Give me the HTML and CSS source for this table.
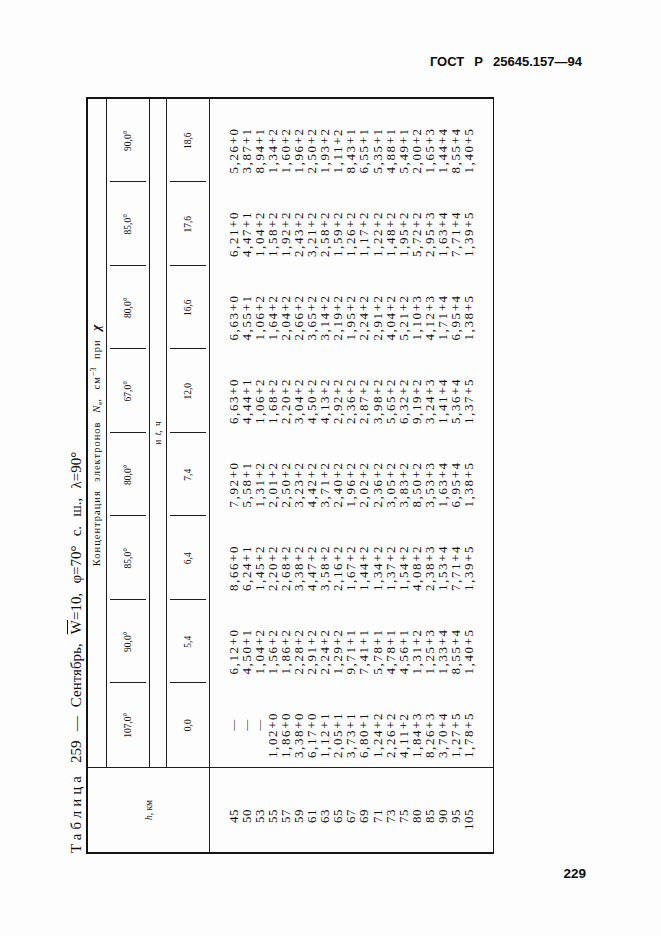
FILE: index.html
```html
<!DOCTYPE html>
<html lang="ru">
<head>
<meta charset="utf-8">
<title>ГОСТ Р 25645.157—94, с. 229</title>
<link rel="stylesheet" href="styles.css">
</head>
<body>
<div class="page">
  <header class="runhead">ГОСТ Р 25645.157—94</header>
  <div class="sheet">
    <div class="turn">
      <p class="caption"><span class="spaced">Таблица</span> 259 — Сентябрь, <span class="bar">W</span>=10, φ=70° с. ш., λ=90°</p>
      <table class="data">
        <colgroup><col class="c-h"><col class="c-v"><col class="c-v"><col class="c-v"><col class="c-v"><col class="c-v"><col class="c-v"><col class="c-v"><col class="c-v"></colgroup>
        <thead>
          <tr class="r-conc"><th rowspan="4" class="hcol"><i>h</i>, км</th><th colspan="8" class="conc">Концентрация электронов <i>N</i><sub>e</sub>, см<sup>−3</sup> при <i class="chi-sym">χ</i></th></tr>
          <tr class="r-chi"><th>107,0°</th><th>90,0°</th><th>85,0°</th><th>80,0°</th><th>67,0°</th><th>80,0°</th><th>85,0°</th><th>90,0°</th></tr>
          <tr class="r-tl"><th colspan="8" class="tlabel">и <i>t</i>, ч</th></tr>
          <tr class="r-t"><th>0,0</th><th>5,4</th><th>6,4</th><th>7,4</th><th>12,0</th><th>16,6</th><th>17,6</th><th>18,6</th></tr>
        </thead>
        <tbody>
          <tr><td class="h">45</td><td class="na">—</td><td>6,12+0</td><td>8,66+0</td><td>7,92+0</td><td>6,63+0</td><td>6,63+0</td><td>6,21+0</td><td>5,26+0</td></tr>
          <tr><td class="h">50</td><td class="na">—</td><td>4,50+1</td><td>6,24+1</td><td>5,58+1</td><td>4,44+1</td><td>4,55+1</td><td>4,47+1</td><td>3,87+1</td></tr>
          <tr><td class="h">53</td><td class="na">—</td><td>1,04+2</td><td>1,45+2</td><td>1,31+2</td><td>1,06+2</td><td>1,06+2</td><td>1,04+2</td><td>8,94+1</td></tr>
          <tr><td class="h">55</td><td>1,02+0</td><td>1,56+2</td><td>2,20+2</td><td>2,01+2</td><td>1,68+2</td><td>1,64+2</td><td>1,58+2</td><td>1,34+2</td></tr>
          <tr><td class="h">57</td><td>1,86+0</td><td>1,86+2</td><td>2,68+2</td><td>2,50+2</td><td>2,20+2</td><td>2,04+2</td><td>1,92+2</td><td>1,60+2</td></tr>
          <tr><td class="h">59</td><td>3,38+0</td><td>2,28+2</td><td>3,38+2</td><td>3,23+2</td><td>3,04+2</td><td>2,66+2</td><td>2,43+2</td><td>1,96+2</td></tr>
          <tr><td class="h">61</td><td>6,17+0</td><td>2,91+2</td><td>4,47+2</td><td>4,42+2</td><td>4,50+2</td><td>3,65+2</td><td>3,21+2</td><td>2,50+2</td></tr>
          <tr><td class="h">63</td><td>1,12+1</td><td>2,24+2</td><td>3,58+2</td><td>3,71+2</td><td>4,13+2</td><td>3,14+2</td><td>2,58+2</td><td>1,93+2</td></tr>
          <tr><td class="h">65</td><td>2,05+1</td><td>1,29+2</td><td>2,16+2</td><td>2,40+2</td><td>2,92+2</td><td>2,19+2</td><td>1,59+2</td><td>1,11+2</td></tr>
          <tr><td class="h">67</td><td>3,73+1</td><td>9,71+1</td><td>1,67+2</td><td>1,96+2</td><td>2,36+2</td><td>1,95+2</td><td>1,26+2</td><td>8,43+1</td></tr>
          <tr><td class="h">69</td><td>6,80+1</td><td>7,41+1</td><td>1,44+2</td><td>2,02+2</td><td>2,87+2</td><td>2,24+2</td><td>1,17+2</td><td>6,55+1</td></tr>
          <tr><td class="h">71</td><td>1,24+2</td><td>5,78+1</td><td>1,34+2</td><td>2,36+2</td><td>3,98+2</td><td>2,91+2</td><td>1,22+2</td><td>5,35+1</td></tr>
          <tr><td class="h">73</td><td>2,26+2</td><td>4,78+1</td><td>1,37+2</td><td>3,05+2</td><td>5,65+2</td><td>4,04+2</td><td>1,48+2</td><td>4,88+1</td></tr>
          <tr><td class="h">75</td><td>4,11+2</td><td>4,56+1</td><td>1,54+2</td><td>3,83+2</td><td>6,32+2</td><td>5,21+2</td><td>1,95+2</td><td>5,49+1</td></tr>
          <tr><td class="h">80</td><td>1,84+3</td><td>1,31+2</td><td>4,08+2</td><td>8,50+2</td><td>9,19+2</td><td>1,10+3</td><td>5,72+2</td><td>2,00+2</td></tr>
          <tr><td class="h">85</td><td>8,26+3</td><td>1,25+3</td><td>2,38+3</td><td>3,53+3</td><td>3,24+3</td><td>4,12+3</td><td>2,95+3</td><td>1,65+3</td></tr>
          <tr><td class="h">90</td><td>3,70+4</td><td>1,33+4</td><td>1,53+4</td><td>1,63+4</td><td>1,41+4</td><td>1,71+4</td><td>1,63+4</td><td>1,44+4</td></tr>
          <tr><td class="h">95</td><td>1,27+5</td><td>8,55+4</td><td>7,71+4</td><td>6,95+4</td><td>5,36+4</td><td>6,95+4</td><td>7,71+4</td><td>8,55+4</td></tr>
          <tr><td class="h">105</td><td>1,78+5</td><td>1,40+5</td><td>1,39+5</td><td>1,38+5</td><td>1,37+5</td><td>1,38+5</td><td>1,39+5</td><td>1,40+5</td></tr>
        </tbody>
      </table>
    </div>
  </div>
  <footer class="folio">229</footer>
</div>
</body>
</html>
```
FILE: styles.css
```css
html, body {
  margin: 0;
  padding: 0;
  background: #fdfdfd;
}

body {
  font-family: "Liberation Serif", "DejaVu Serif", serif;
  color: #111;
}

.page {
  width: 661px;
  height: 936px;
  box-sizing: border-box;
  padding-top: 54px;
  display: flex;
  flex-direction: column;
}

.runhead {
  font-family: "Liberation Sans", Arial, sans-serif;
  font-weight: 700;
  font-size: 13px;
  line-height: 16px;
  word-spacing: 6.5px;
  text-align: right;
  padding-right: 79px;
  color: #0d0d0d;
}

.sheet {
  width: 428px;
  height: 757px;
  margin: 27px 0 0 66px;
  flex: none;
}

.turn {
  width: 757px;
  height: 428px;
  transform-origin: 0 0;
  transform: translateY(757px) rotate(-90deg);
  display: flex;
  flex-direction: column;
}

.caption {
  margin: 0;
  height: 22px;
  padding-left: 1px;
  font-size: 15px;
  line-height: 20px;
  word-spacing: 5.4px;
  white-space: nowrap;
}

.spaced {
  letter-spacing: 4px;
}

.bar {
  text-decoration: overline;
}

.data {
  width: 757px;
  table-layout: fixed;
  border-collapse: separate;
  border-spacing: 0;
  border-style: solid;
  border-color: #141414;
  border-width: 2px 2px 1.5px 2px;
}

.c-h {
  width: 85px;
}

.data th {
  font-weight: normal;
  padding: 0;
  text-align: center;
  vertical-align: middle;
  font-size: 9.5px;
  white-space: nowrap;
}

.hcol {
  font-size: 10.5px;
  border-right: 1px solid #1e1e1e;
  border-bottom: 1px solid #1e1e1e;
}

.r-conc { height: 15px; }
.r-chi { height: 43px; }
.r-tl { height: 17px; }
.r-t { height: 43px; }

.data .conc {
  font-size: 10.5px;
  letter-spacing: 1px;
  word-spacing: 5px;
  padding-right: 24px;
  line-height: 12px;
  border-bottom: 1px solid #1e1e1e;
}

.conc sub {
  font-size: 7px;
  vertical-align: -2px;
  letter-spacing: 0;
}

.conc sup {
  font-size: 8px;
  vertical-align: 4px;
  letter-spacing: 0;
}

.chi-sym {
  font-size: 13px;
  font-weight: 700;
}

.r-chi th,
.r-t th {
  border-bottom: 1px solid #1e1e1e;
  background-image: linear-gradient(#1e1e1e, #1e1e1e);
  background-repeat: no-repeat;
  background-size: 1px calc(100% - 6px);
  background-position: left center;
}

.r-chi th:first-child,
.r-t th:first-child {
  background-image: none;
}

.data .tlabel {
  font-size: 9.5px;
  word-spacing: 2px;
  border-bottom: 1px solid #1e1e1e;
}

.data td {
  font-size: 13px;
  line-height: 13.1px;
  padding: 0 0 0 9px;
  letter-spacing: 1.6px;
  white-space: nowrap;
  vertical-align: middle;
}

.data td.h {
  text-align: right;
  padding: 0 41px 0 0;
  letter-spacing: 0.5px;
  border-right: 1px solid #1e1e1e;
}

.data td.na {
  text-align: center;
  padding: 0;
  font-size: 11px;
  letter-spacing: 0;
}

.data tbody tr:first-child td {
  padding-top: 16.5px;
}

.data tbody tr:last-child td {
  padding-bottom: 18px;
}

.folio {
  margin-top: 12px;
  text-align: right;
  padding-right: 75px;
  font-family: "Liberation Sans", Arial, sans-serif;
  font-weight: 700;
  font-size: 13.5px;
  line-height: 15px;
  color: #0d0d0d;
}
```
